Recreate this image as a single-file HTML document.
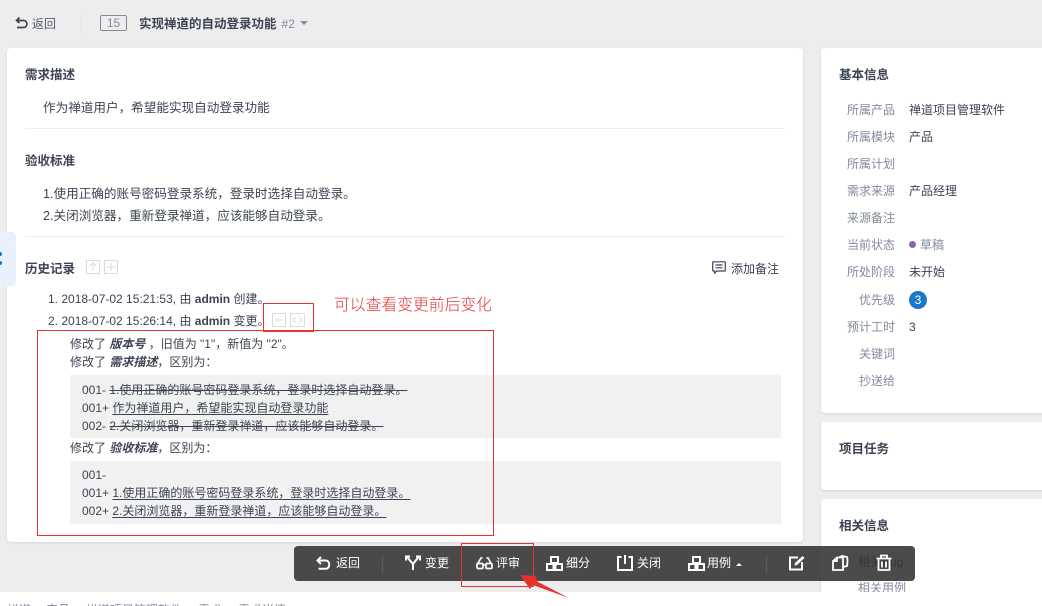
<!DOCTYPE html>
<html><head><meta charset="utf-8">
<style>
html,body{margin:0;padding:0;width:1042px;height:606px;overflow:hidden;background:#fff}
body{position:relative;font-family:"Liberation Sans","Noto Sans CJK SC",sans-serif;font-size:12px;color:#3c4353}
.a{position:absolute;white-space:nowrap;line-height:18px;margin-top:1px}
.b{position:absolute}
.h{font-weight:700;font-size:12.5px;color:#3c4353}
.t{font-size:12.6px;color:#3c4353}
.l{font-size:12px;color:#838a9d;text-align:right;width:60px;left:835px}
.v{font-size:12px;color:#3c4353;left:909px}
.card{position:absolute;background:#fff;border-radius:4px;box-shadow:0 1px 2px rgba(0,0,0,.1)}
.hr{position:absolute;height:1px;background:#eee}
.red{position:absolute;border:1px solid #e53333;box-sizing:border-box}
.g{position:absolute;left:70px;width:711px;background:#f1f1f1}
u,s{text-underline-offset:2px;text-decoration-color:#3c4353}
.w{position:absolute;color:#fff;font-size:12px;line-height:18px;white-space:nowrap;top:554px}
svg{position:absolute;overflow:visible}
</style></head><body>
<div class="b" style="left:0;top:0;width:1042px;height:592px;background:#ededed"></div>

<!-- header -->
<svg style="left:15px;top:16px" width="14" height="14" viewBox="0 0 14 14" fill="none" stroke="#3c4353" stroke-width="1.7"><path d="M4.5 1.5 1.5 4.5 4.5 7M1.5 4.5H8.5C13 4.5 13 11.5 8.500 11.500H2"/></svg>
<div class="a" style="left:32px;top:14px;color:#555d6e">返回</div>
<div class="b" style="left:81px;top:15px;width:1px;height:18px;background:#e2e2e2"></div>
<div class="b" style="left:100px;top:15px;width:27px;height:16px;border:1px solid #838a9d;border-radius:2px;box-sizing:border-box;text-align:center;line-height:14px;color:#838a9d;font-size:12px">15</div>
<div class="a" style="left:139px;top:14px;font-weight:700;font-size:12.5px;color:#3c4353">实现禅道的自动登录功能<span style="font-weight:400;color:#838a9d;font-size:12px;margin-left:5px">#2</span></div>
<div class="b" style="left:300px;top:21px;border:4px solid transparent;border-top:4px solid #838a9d"></div>

<!-- main card -->
<div class="card" style="left:7px;top:48px;width:796px;height:494px"></div>
<div class="a h" style="left:25px;top:65px">需求描述</div>
<div class="a t" style="left:43px;top:98px">作为禅道用户，希望能实现自动登录功能</div>
<div class="hr" style="left:25px;top:128px;width:760px"></div>
<div class="a h" style="left:25px;top:151px">验收标准</div>
<div class="a t" style="left:43px;top:184px">1.使用正确的账号密码登录系统，登录时选择自动登录。</div>
<div class="a t" style="left:43px;top:206px">2.关闭浏览器，重新登录禅道，应该能够自动登录。</div>
<div class="hr" style="left:25px;top:236px;width:760px"></div>

<!-- left tab -->
<div class="b" style="left:0;top:232px;width:16px;height:54px;background:#e8f1fd;border-radius:0 4px 4px 0"></div>
<div class="b" style="left:-2px;top:252px;width:4px;height:4px;background:#1a70c8;border-radius:2px"></div>
<div class="b" style="left:-2px;top:261px;width:4px;height:4px;background:#1a70c8;border-radius:2px"></div>

<!-- history -->
<div class="a h" style="left:25px;top:259px">历史记录</div>
<svg style="left:86px;top:260px" width="14" height="14" viewBox="0 0 14 14" fill="none" stroke="#d8dbe3"><rect x=".5" y=".5" width="13" height="13"/><path d="M7 11V3M3.500 6.500 7 3l3.500 3.500"/></svg>
<svg style="left:104px;top:260px" width="14" height="14" viewBox="0 0 14 14" fill="none" stroke="#d8dbe3"><rect x=".5" y=".5" width="13" height="13"/><path d="M7 2.500v9M2.500 7h9"/></svg>
<svg style="left:712px;top:261px" width="14" height="13" viewBox="0 0 14 13" fill="none" stroke="#3c4353" stroke-width="1.2"><path d="M1.500.8h11q.8 0 .8.8v7.600q0 .8-.8.8H5L2.500 12V10H1.500q-.8 0-.8-.8V1.600q0-.8.8-.8zM3.500 4h7M3.500 6.800h7"/></svg>
<div class="a" style="left:731px;top:259px;color:#3c4353">添加备注</div>

<div class="a" style="left:48px;top:289px;color:#3c4353">1. 2018-07-02 15:21:53, 由 <b>admin</b> 创建。</div>
<div class="a" style="left:48px;top:311px;color:#3c4353">2. 2018-07-02 15:26:14, 由 <b>admin</b> 变更。</div>
<svg style="left:272px;top:313px" width="14" height="14" viewBox="0 0 14 14" fill="none" stroke="#d8dbe3"><rect x=".5" y=".5" width="13" height="13"/><path d="M3 7h8"/></svg>
<svg style="left:290px;top:313px" width="15" height="14" viewBox="0 0 15 14" fill="none" stroke="#d8dbe3"><rect x=".5" y=".5" width="14" height="13"/><path d="M6 4 3 7l3 3M9 4l3 3-3 3"/></svg>
<div class="a" style="left:334px;top:295px;color:#e53333;font-size:15.8px;line-height:20px;font-weight:300">可以查看变更前后变化</div>

<div class="a" style="left:70px;top:334px">修改了 <b><i>版本号</i></b> ，旧值为 "1"，新值为 "2"。</div>
<div class="a" style="left:70px;top:352px">修改了 <b><i>需求描述</i></b>，区别为：</div>
<div class="g" style="top:375px;height:63px"></div>
<div class="a" style="left:82px;top:380px">001- <s>1.使用正确的账号密码登录系统，登录时选择自动登录。</s></div>
<div class="a" style="left:82px;top:398px">001+ <u>作为禅道用户，希望能实现自动登录功能</u></div>
<div class="a" style="left:82px;top:416px">002- <s>2.关闭浏览器，重新登录禅道，应该能够自动登录。</s></div>
<div class="a" style="left:70px;top:438px">修改了 <b><i>验收标准</i></b>，区别为：</div>
<div class="g" style="top:461px;height:63px"></div>
<div class="a" style="left:82px;top:465px">001-</div>
<div class="a" style="left:82px;top:483px">001+ <u>1.使用正确的账号密码登录系统，登录时选择自动登录。</u></div>
<div class="a" style="left:82px;top:501px">002+ <u>2.关闭浏览器，重新登录禅道，应该能够自动登录。</u></div>
<div class="red" style="left:263px;top:303px;width:51px;height:29px"></div>
<div class="red" style="left:37px;top:330px;width:457px;height:206px"></div>

<!-- side: basic info -->
<div class="card" style="left:821px;top:48px;width:225px;height:365px"></div>
<div class="a h" style="left:839px;top:65px">基本信息</div>
<div class="a l" style="top:100px">所属产品</div><div class="a v" style="top:100px">禅道项目管理软件</div>
<div class="a l" style="top:127px">所属模块</div><div class="a v" style="top:127px">产品</div>
<div class="a l" style="top:154px">所属计划</div>
<div class="a l" style="top:181px">需求来源</div><div class="a v" style="top:181px">产品经理</div>
<div class="a l" style="top:208px">来源备注</div>
<div class="a l" style="top:235px">当前状态</div>
<div class="b" style="left:909px;top:241px;width:7px;height:7px;border-radius:50%;background:#8a5fb8"></div>
<div class="a" style="left:920px;top:235px;color:#838a9d">草稿</div>
<div class="a l" style="top:262px">所处阶段</div><div class="a v" style="top:262px">未开始</div>
<div class="a l" style="top:290px">优先级</div>
<div class="b" style="left:909px;top:291px;width:18px;height:18px;border-radius:50%;background:#1a78c8;color:#fff;text-align:center;line-height:18px;font-size:12px">3</div>
<div class="a l" style="top:317px">预计工时</div><div class="a v" style="top:317px">3</div>
<div class="a l" style="top:344px">关键词</div>
<div class="a l" style="top:371px">抄送给</div>

<div class="card" style="left:821px;top:422px;width:225px;height:68px"></div>
<div class="a h" style="left:839px;top:439px">项目任务</div>
<div class="card" style="left:821px;top:499px;width:225px;height:100px"></div>
<div class="a h" style="left:839px;top:516px">相关信息</div>
<div class="a" style="left:858px;top:552px;color:#3c4353">相关Bug</div>
<div class="a" style="left:858px;top:578px;color:#838a9d">相关用例</div>

<!-- footer white overlay -->
<div class="b" style="left:0;top:592px;width:1042px;height:14px;background:#fff"></div>
<div class="a" style="left:7px;top:600px;color:#838a9d">禅道</div>
<div class="a" style="left:46px;top:600px;color:#838a9d">产品</div>
<div class="a" style="left:86px;top:600px;color:#838a9d">禅道项目管理软件</div>
<div class="a" style="left:198px;top:600px;color:#838a9d">需求</div>
<div class="a" style="left:238px;top:600px;color:#838a9d">需求详情</div>

<!-- toolbar -->
<div class="b" style="left:294px;top:546px;width:621px;height:35px;background:rgba(50,50,50,.88);border-radius:4px"></div>
<svg style="left:316px;top:556px" width="15" height="15" viewBox="0 0 15 15" fill="none" stroke="#fff" stroke-width="2"><path d="M5 1 1.500 4.500 5 8M1.500 4.500H9.500C14.500 4.500 14.500 12.800 9.500 12.800H2.500"/></svg>
<div class="w" style="left:336px">返回</div>
<div class="b" style="left:382px;top:556px;width:1px;height:18px;background:#5c5c5c"></div>
<svg style="left:405px;top:555px" width="16" height="16" viewBox="0 0 16 16" fill="none" stroke="#fff" stroke-width="2"><path d="M8 15V9L2 2M8 9l5.500-7M1 5.500V1.500h4M15 5.500V1.500h-4"/></svg>
<div class="w" style="left:425px">变更</div>
<svg style="left:476px;top:556px" width="17" height="14" viewBox="0 0 17 14" fill="none" stroke="#fff" stroke-width="1.700"><rect x="1" y="7.500" width="6" height="5" rx="1"/><rect x="10" y="7.500" width="6" height="5" rx="1"/><path d="M7 9h3M1.500 8 5 2h1.500M15.500 8 12 2h-1.500"/></svg>
<div class="w" style="left:496px">评审</div>
<svg style="left:546px;top:556px" width="17" height="15" viewBox="0 0 17 15" fill="none" stroke="#fff" stroke-width="2"><rect x="5" y="1" width="7" height="6"/><rect x="1" y="8" width="6.500" height="6"/><rect x="9.500" y="8" width="6.500" height="6"/></svg>
<div class="w" style="left:566px">细分</div>
<svg style="left:617px;top:555px" width="16" height="16" viewBox="0 0 16 16" fill="none" stroke="#fff" stroke-width="2"><path d="M4.500 2H1v13h14V2h-3.500M8 0v9"/></svg>
<div class="w" style="left:637px">关闭</div>
<svg style="left:688px;top:556px" width="17" height="15" viewBox="0 0 17 15" fill="none" stroke="#fff" stroke-width="2"><rect x="5" y="1" width="7" height="6"/><rect x="1" y="8" width="6.500" height="6"/><rect x="9.500" y="8" width="6.500" height="6"/></svg>
<div class="w" style="left:707px">用例</div>
<div class="b" style="left:736px;top:563px;border:3px solid transparent;border-bottom:3px solid #fff;border-top:0"></div>
<div class="b" style="left:766px;top:556px;width:1px;height:18px;background:#5c5c5c"></div>
<svg style="left:789px;top:555px" width="16" height="16" viewBox="0 0 16 16" fill="none" stroke="#fff" stroke-width="2"><path d="M9 2.500H1v12h12V7"/><path d="M5.500 10.500 6 8l7.500-7 2 2L8 10z" fill="#fff" stroke="none"/></svg>
<svg style="left:832px;top:555px" width="17" height="16" viewBox="0 0 17 16" fill="none" stroke="#fff" stroke-width="1.800"><path d="M1 6 5 2.500h6V15H1zM1 6h4V2.500"/><path d="M7 2.500 10 1l5 1q1 3 0 9l-4 1"/></svg>
<svg style="left:876px;top:554px" width="16" height="17" viewBox="0 0 16 17" fill="none" stroke="#fff" stroke-width="1.800"><path d="M.5 4.500h15M5 4.500V1.500h6v3M2.500 4.500V16h11V4.500M6 7.500v6M10 7.500v6"/></svg>

<!-- annotation -->
<div class="red" style="left:461px;top:543px;width:73px;height:44px"></div>
<svg style="left:515px;top:572px" width="60" height="34" viewBox="0 0 60 34"><path d="M5 3 20 4 23 10 54 26 18 13 15 17z" fill="#e8312a"/></svg>
</body></html>
